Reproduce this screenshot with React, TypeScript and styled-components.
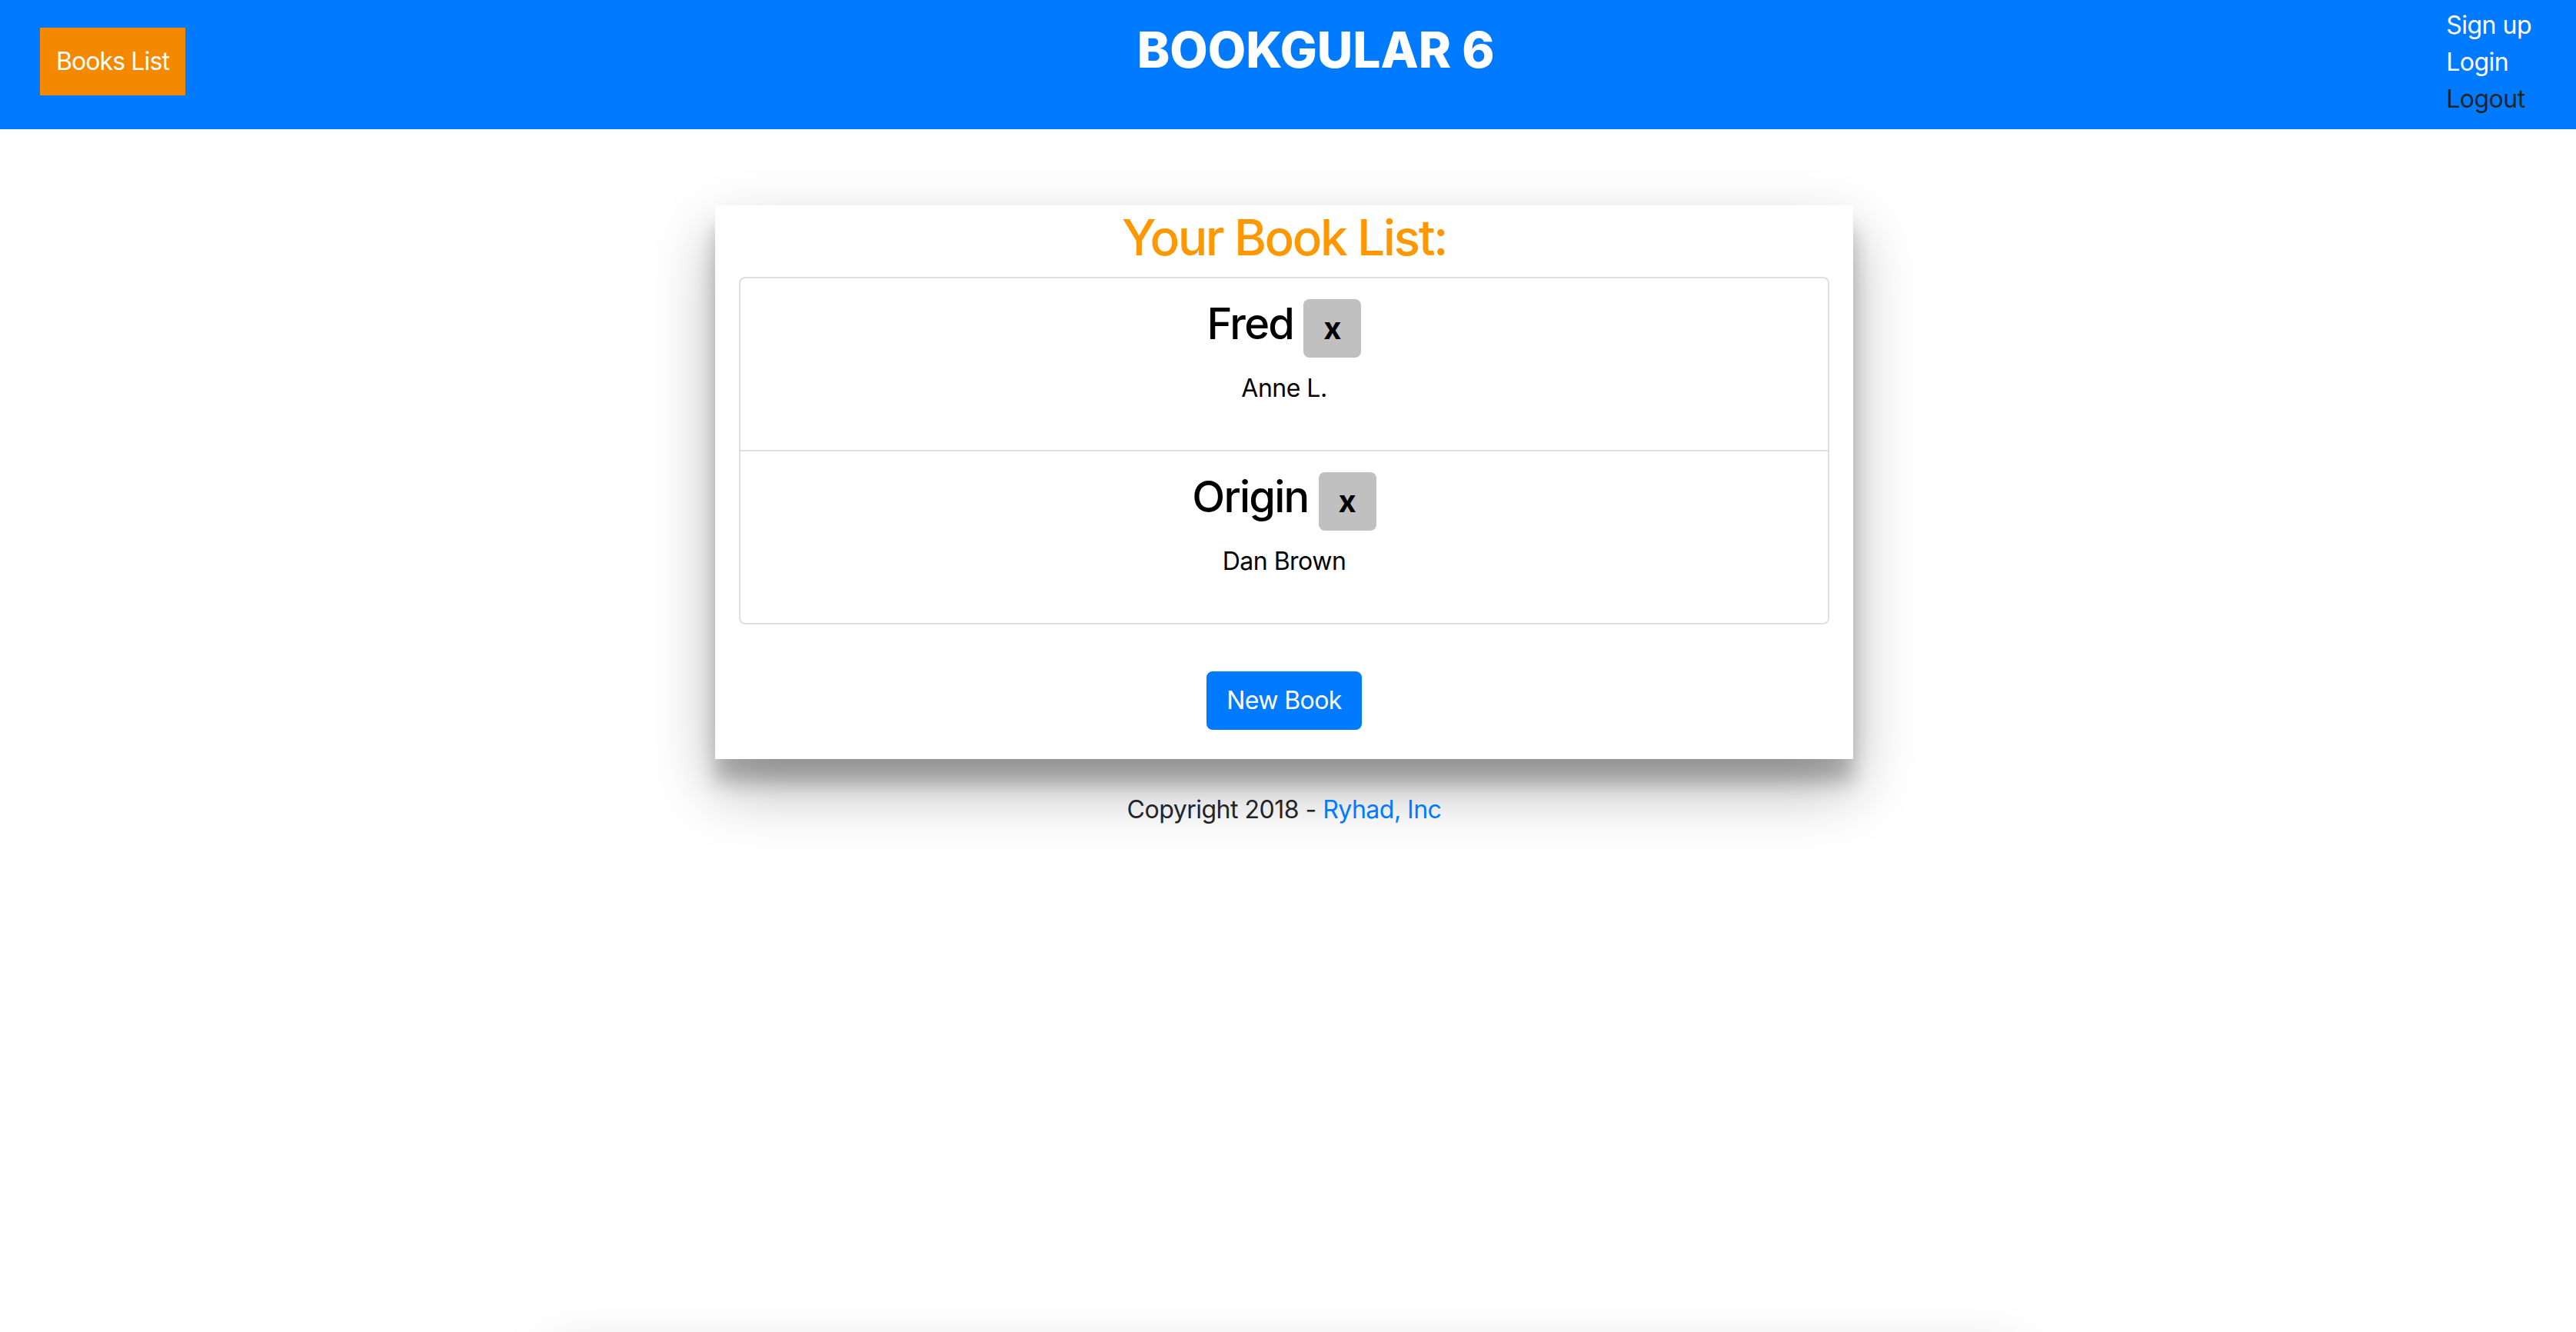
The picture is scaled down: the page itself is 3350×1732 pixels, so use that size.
import React from 'react'
import styled, { createGlobalStyle } from 'styled-components'

const GlobalStyle = createGlobalStyle`
  body {
    margin: 0;
    font-family: Inter, "Noto Sans", "Liberation Sans", sans-serif;
    color: #212529;
    background: #fff;
  }
`

const Page = styled.div`
  height: 100vh;
  overflow: hidden;
  display: flex;
  flex-direction: column;
`

const Header = styled.header`
  flex-shrink: 0;
  height: 168px;
  background: #007bff;
  display: flex;
  justify-content: space-between;
  align-items: flex-start;
  padding: 0 58px 0 52px;
  box-sizing: border-box;
`

const HomeButton = styled.button`
  margin-top: 36px;
  padding: 20px 21px;
  background: #f48900;
  color: #fff;
  border: none;
  font-family: inherit;
  font-size: 32px;
  line-height: 48px;
  letter-spacing: -0.9px;
`

const Brand = styled.h1`
  margin: 27px 0 0;
  color: #fff;
  font-size: 64px;
  line-height: 1.2;
  font-weight: 800;
`

const Nav = styled.nav`
  margin-top: 9px;
  display: flex;
  flex-direction: column;
`

const NavLink = styled.a<{ $dark?: boolean }>`
  font-size: 32px;
  line-height: 48px;
  letter-spacing: -0.5px;
  color: ${p => (p.$dark ? '#212529' : '#fff')};
  text-decoration: none;
`

const Main = styled.main`
  flex: 1;
  display: flex;
  flex-direction: column;
  align-items: center;
  padding-right: 10px;
`

const Card = styled.section`
  width: 1480px;
  margin-top: 99px;
  padding: 0 31px 38px;
  box-sizing: border-box;
  background: #fff;
  text-align: center;
  box-shadow: 0 38px 76px rgba(0, 0, 0, 0.3), 0 30px 24px rgba(0, 0, 0, 0.22);
`

const CardTitle = styled.h2`
  margin: 0 0 12px;
  padding-top: 4px;
  color: #ff9800;
  font-size: 64px;
  line-height: 1.2;
  font-weight: 500;
  letter-spacing: -2.4px;
`

const List = styled.ul`
  list-style: none;
  margin: 0;
  padding: 0;
  border: 2px solid #dfdfdf;
  border-radius: 8px;
`

const Item = styled.li`
  padding: 26px 40px 24px;
  color: #000;
  & + & {
    border-top: 2px solid #dfdfdf;
  }
`

const BookTitle = styled.h3`
  margin: 0 0 16px;
  font-size: 56px;
  line-height: 1.2;
  font-weight: 500;
  letter-spacing: -1.8px;
`

const RemoveButton = styled.button`
  display: inline-block;
  padding: 8px 26px;
  background: #c0c0c0;
  color: #000;
  border: none;
  border-radius: 8px;
  font-family: inherit;
  font-size: 40px;
  line-height: 60px;
  font-weight: 700;
  letter-spacing: 0;
`

const Author = styled.p`
  margin: 0 0 32px;
  font-size: 32px;
  line-height: 48px;
  letter-spacing: -0.5px;
`

const Actions = styled.div`
  padding-top: 61px;
`

const PrimaryButton = styled.button`
  padding: 12px 24px;
  background: #007bff;
  color: #fff;
  border: 2px solid #007bff;
  border-radius: 8px;
  font-family: inherit;
  font-size: 32px;
  line-height: 48px;
  letter-spacing: -0.6px;
`

const Footer = styled.footer`
  margin-top: 42px;
  text-align: center;
  font-size: 32px;
  line-height: 48px;
  letter-spacing: -0.5px;
  color: #212529;
  a {
    color: #007bff;
    text-decoration: none;
  }
`

/* next panel, sitting just under the fold: only its shadow shows */
const BelowFold = styled.div`
  flex-shrink: 0;
  width: 1900px;
  height: 200px;
  margin-top: auto;
  margin-bottom: -200px;
  background: #fff;
  box-shadow: 0 38px 76px rgba(0, 0, 0, 0.25);
`

const books = [
  { title: 'Fred', author: 'Anne L.' },
  { title: 'Origin', author: 'Dan Brown' },
]

const App = () => {
  return (
    <Page>
      <GlobalStyle />
      <Header>
        <HomeButton>Books List</HomeButton>
        <Brand>BOOKGULAR 6</Brand>
        <Nav>
          <NavLink href="#">Sign up</NavLink>
          <NavLink href="#">Login</NavLink>
          <NavLink href="#" $dark>Logout</NavLink>
        </Nav>
      </Header>
      <Main>
        <Card>
          <CardTitle>Your Book List:</CardTitle>
          <List>
            {books.map(book => (
              <Item key={book.title}>
                <BookTitle>
                  {book.title} <RemoveButton>x</RemoveButton>
                </BookTitle>
                <Author>{book.author}</Author>
              </Item>
            ))}
          </List>
          <Actions>
            <PrimaryButton>New Book</PrimaryButton>
          </Actions>
        </Card>
        <Footer>
          Copyright 2018 - <a href="#">Ryhad, Inc</a>
        </Footer>
        <BelowFold />
      </Main>
    </Page>
  )
}

export default App
